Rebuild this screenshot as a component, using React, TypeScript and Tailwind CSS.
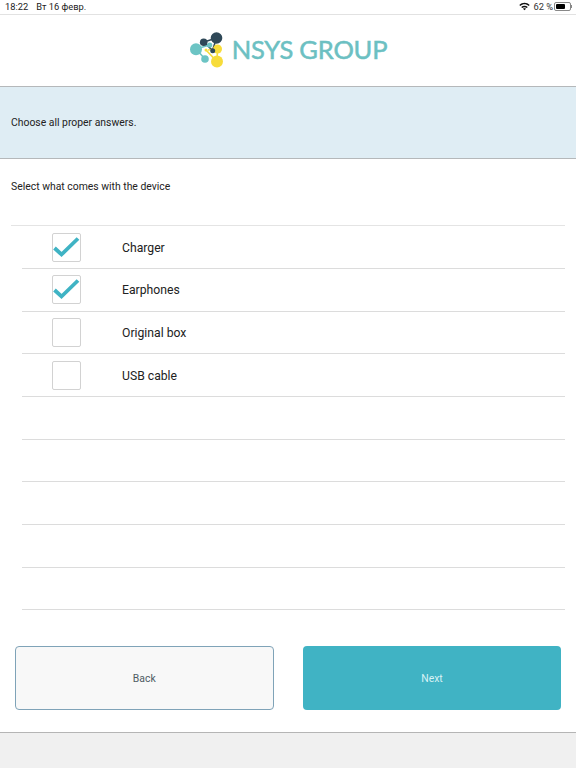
import React from 'react';

const answers = [
  { label: 'Charger', checked: true },
  { label: 'Earphones', checked: true },
  { label: 'Original box', checked: false },
  { label: 'USB cable', checked: false },
  null,
  null,
  null,
  null,
  null,
];

// Drawn in page coordinates so the dots are easy to compare with the reference
const Logo = () => (
  <svg width="36" height="38" viewBox="188 32 36 38" className="block">
    <g strokeWidth="1.6" fill="none">
      <path d="M203 43 L211.500 51.500 L215.500 39" stroke="#2f4858" />
      <path d="M203 43 L215.500 39" stroke="#2f4858" />
      <path d="M195 50 L204 60" stroke="#6cc4c4" />
      <path d="M195 50 L208.500 46" stroke="#6cc4c4" />
      <path d="M205 51 L216 62.500 L216.500 50 L207 51" stroke="#f7dc3a" />
    </g>
    <circle cx="215.500" cy="39" r="5.800" fill="#2f4858" />
    <circle cx="202.700" cy="43.300" r="3.800" fill="#2f4858" />
    <circle cx="195" cy="50.300" r="6" fill="#6cc4c4" />
    <circle cx="208.700" cy="46" r="2.600" fill="#6cc4c4" />
    <circle cx="216.500" cy="50" r="4.500" fill="#f7dc3a" />
    <circle cx="205" cy="51" r="1.500" fill="#f7dc3a" />
    <circle cx="211.700" cy="51.700" r="2.500" fill="#2f4858" />
    <circle cx="204" cy="60" r="3.800" fill="#6cc4c4" />
    <circle cx="216" cy="62.500" r="6" fill="#f7dc3a" />
  </svg>
);

const Check = () => (
  <svg width="27" height="27" viewBox="0 0 27 27" className="block">
    <path d="M1.500 14 L8.500 20.500 L25 4.500" fill="none" stroke="#3fb3c4" strokeWidth="3.800" />
  </svg>
);

const WifiIcon = () => (
  <svg width="11" height="9" viewBox="0 0 11 9" className="block">
    <path d="M0.300 3 C3.300 0 7.700 0 10.700 3 L9.700 4 C7.200 1.800 3.800 1.800 1.300 4 Z" fill="#111" />
    <path d="M2.200 4.900 C4 3.400 7 3.400 8.800 4.900 L7.800 5.900 C6.500 4.900 4.500 4.900 3.200 5.900 Z" fill="#111" />
    <path d="M4 6.700 C4.900 6.100 6.100 6.100 7 6.700 L5.500 8.300 Z" fill="#111" />
  </svg>
);

export default function App() {
  return (
    <div className="flex h-[768px] w-[576px] flex-col overflow-hidden bg-white font-['Roboto','Liberation_Sans',sans-serif] text-[#222]">
      {/* Status bar */}
      <div className="flex h-[15px] items-center justify-between border-b border-[#e2e2e2] pl-[5px] pr-[4px] text-[9.300px] leading-none text-[#222]">
        <div className="flex gap-[8px]">
          <span>18:22</span>
          <span>Вт 16 февр.</span>
        </div>
        <div className="flex items-center">
          <WifiIcon />
          <span className="ml-[3px] text-[#333]">62 %</span>
          <div className="ml-[1px] flex items-center">
            <div className="h-[9px] w-[17px] rounded-[2px] border border-[#888] p-[1px]">
              <div className="h-full w-[9px] rounded-[1px] bg-black" />
            </div>
            <div className="h-[3px] w-[1px] bg-[#888]" />
          </div>
        </div>
      </div>

      {/* Header */}
      <div className="flex h-[72px] items-center justify-center gap-[7px] border-b border-[#b5b8ba] pb-[1px]">
        <Logo />
        <span className="font-['Lato','Open_Sans',sans-serif] text-[25.500px] leading-none tracking-[-0.2px] text-[#6cc0c2] [-webkit-text-stroke:0.5px_#6cc0c2]">NSYS GROUP</span>
      </div>

      {/* Hint band */}
      <div className="flex h-[72px] items-center border-b border-[#b5b8ba] bg-[#dfedf4] pl-[11px] pt-[1px] text-[10.400px] text-[#222]">
        Choose all proper answers.
      </div>

      {/* Question */}
      <div className="px-[11px]">
        <div className="flex h-[66.400px] items-center pb-[11px] text-[10.400px] text-[#222]">Select what comes with the device</div>
        <div className="border-t border-[#e4e4e4]">
          {answers.map((answer, i) => (
            <div key={i} className="ml-[11px] flex h-[42.670px] items-center border-b border-[#dcdcdc]">
              {answer && (
                <>
                  <div className="ml-[30px] h-[29px] w-[29px] rounded-[2px] border border-[#d2d2d2] bg-white">
                    {answer.checked && <Check />}
                  </div>
                  <span className="ml-[41px] pt-[1px] text-[12.200px] text-[#222]">{answer.label}</span>
                </>
              )}
            </div>
          ))}
        </div>
      </div>

      {/* Buttons */}
      <div className="mt-[35.500px] flex gap-[29.500px] pl-[15px]">
        <button className="h-[64.500px] w-[258.500px] rounded-[4px] border border-[#7fa3b8] bg-[#f8f8f8] pt-[1px] text-[10.400px] text-[#4f5b63]">Back</button>
        <button className="h-[64.500px] w-[258px] rounded-[4px] bg-[#40b3c4] pt-[1px] text-[10.400px] text-[#d8f2f5]">Next</button>
      </div>

      {/* Footer */}
      <div className="mt-[21.500px] flex-1 border-t border-[#b5b5b5] bg-[#f0f0f0]" />
    </div>
  );
}
